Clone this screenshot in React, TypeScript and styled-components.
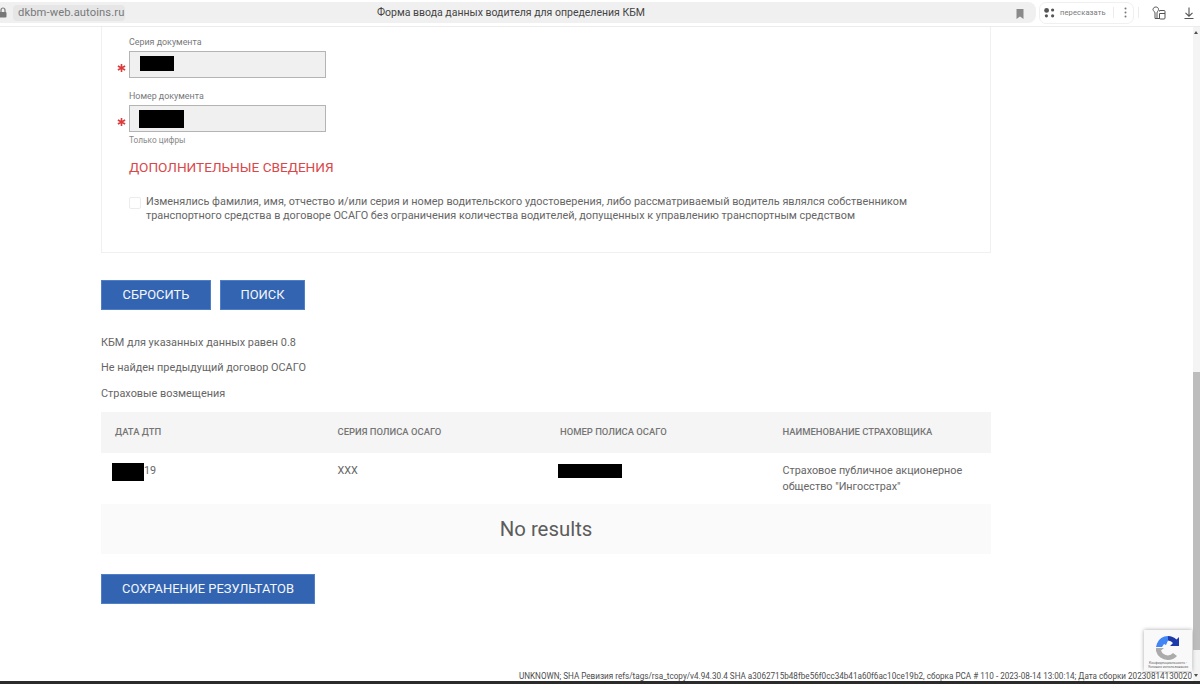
import styled, { createGlobalStyle } from "styled-components";

const GlobalStyle = createGlobalStyle`
  html, body {
    margin: 0;
    padding: 0;
    height: 100%;
    overflow: hidden;
    background: #fff;
  }
  * {
    box-sizing: border-box;
  }
`;

const Screen = styled.div`
  width: 1200px;
  height: 684px;
  position: relative;
  display: flex;
  flex-direction: column;
  overflow: hidden;
  font-family: Roboto, "Liberation Sans", sans-serif;
  color: #6b6b6b;
`;

const BrowserBar = styled.div`
  height: 27px;
  flex: none;
  display: flex;
  align-items: center;
  background: #fff;
  border-bottom: 1px solid #ececec;
  padding-bottom: 1px;
`;

const AddressBar = styled.div`
  width: 1036px;
  height: 21px;
  flex: none;
  display: flex;
  align-items: center;
  background: #f0f0f0;
  border-radius: 0 8px 8px 0;
  position: relative;
`;

const Lock = styled.svg`
  width: 8px;
  height: 11px;
  margin-left: -1px;
  flex: none;
`;

const Host = styled.div`
  margin-left: 6px;
  width: 112px;
  height: 16px;
  padding-left: 5px;
  display: flex;
  align-items: center;
  background: #e6e6e6;
  border-radius: 4px;
  font-size: 11.2px;
  letter-spacing: 0.1px;
  color: #77797b;
`;

const PageTitle = styled.div`
  position: absolute;
  left: 377px;
  top: 4px;
  font-size: 10.5px;
  line-height: 13px;
  color: #444;
`;

const Bookmark = styled.svg`
  position: absolute;
  left: 1016px;
  top: 7px;
  width: 8px;
  height: 10px;
`;

const RetellBox = styled.div`
  width: 95px;
  height: 22px;
  margin-left: 3px;
  display: flex;
  align-items: center;
  flex: none;
  border: 1px solid #f0f0f0;
  border-radius: 7px;
  padding-left: 4px;
  font-size: 7.6px;
  letter-spacing: 0.1px;
  color: #77797b;
`;

const RetellLabel = styled.span`
  margin-left: 5px;
`;

const Divider = styled.span`
  width: 1px;
  height: 11px;
  margin-left: 7px;
  background: #ececec;
  flex: none;
`;

const MoreDots = styled.svg`
  width: 3px;
  height: 11px;
  margin-left: 10px;
  flex: none;
`;

const OuterDivider = styled(Divider)`
  margin-left: 4px;
`;

const ToolIcon = styled.svg<{ $left: number }>`
  width: 14px;
  height: 14px;
  margin-left: ${(p) => p.$left}px;
  flex: none;
`;

const Page = styled.div`
  flex: 1;
  min-height: 0;
  padding-left: 101px;
  width: 991px;
  box-sizing: content-box;
`;

const FormCard = styled.div`
  width: 890px;
  height: 226px;
  padding: 10px 0 0 27px;
  border: 1px solid #f0f0f0;
  border-top: none;
`;

const FieldLabel = styled.div`
  font-size: 8.9px;
  line-height: 11px;
  color: #77797b;
`;

const FieldRow = styled.div`
  display: flex;
  align-items: center;
  margin: 3px 0 0 -12px;
`;

const Asterisk = styled.svg`
  width: 9px;
  height: 10px;
  margin: 6px 3px 0 0;
  flex: none;
`;

const TextBox = styled.div<{ $inset: number }>`
  width: 197px;
  height: 27px;
  background: #f0f0f0;
  border: 1px solid #b4b4b4;
  padding: 4px 0 0 ${(p) => p.$inset}px;
`;

const Redacted = styled.div<{ $w: number; $h: number }>`
  width: ${(p) => p.$w}px;
  height: ${(p) => p.$h}px;
  background: #000;
`;

const FieldGroup = styled.div`
  margin-bottom: 13px;
`;

const Hint = styled.div`
  font-size: 8.3px;
  line-height: 11px;
  margin: -10px 0 0 0;
  color: #8a8a8a;
`;

const SectionTitle = styled.h3`
  margin: 12px 0 0 0;
  font-size: 13.6px;
  line-height: 18px;
  font-weight: 400;
  color: #d9474a;
`;

const CheckRow = styled.div`
  display: flex;
  margin-top: 19px;
`;

const CheckBox = styled.div`
  width: 12px;
  height: 12px;
  flex: none;
  margin: 2px 5px 0 0;
  border: 1px solid #ececec;
  border-radius: 2px;
`;

const CheckText = styled.div`
  font-size: 10.86px;
  line-height: 13.5px;
  width: 775px;
  color: #666;
`;

const Buttons = styled.div`
  display: flex;
  gap: 9px;
  margin-top: 27px;
`;

const Button = styled.div<{ $w: number }>`
  width: ${(p) => p.$w}px;
  height: 30px;
  padding-bottom: 2px;
  display: flex;
  align-items: center;
  justify-content: center;
  background: #3264b1;
  border: 1px solid #4f7fc6;
  color: #f4f6fa;
  font-size: 12.9px;
  font-weight: 400;
`;

const Messages = styled.div`
  margin-top: 26px;
  display: flex;
  flex-direction: column;
  gap: 11px;
  font-size: 10.9px;
  line-height: 14.4px;
  color: #666;
`;

const ResultTable = styled.div`
  width: 890px;
  margin-top: 11px;
`;

const HeadRow = styled.div`
  display: grid;
  grid-template-columns: repeat(4, 222.5px);
  height: 41px;
  padding-bottom: 2px;
  align-items: center;
  background: #f5f5f5;
  font-size: 9.45px;
  font-weight: 500;
  color: #757575;
`;

const HeadCell = styled.div`
  padding-left: 14px;
`;

const BodyRow = styled.div`
  display: grid;
  grid-template-columns: repeat(4, 222.5px);
  height: 51px;
  font-size: 10.82px;
  line-height: 15.5px;
  color: #666;
  padding-top: 10px;
`;

const BodyCell = styled.div`
  padding-left: 14px;
  display: flex;
  align-items: flex-start;
`;

const DateMask = styled(Redacted)`
  margin: 0 0 0 -3px;
`;

const PolicyMask = styled(Redacted)`
  margin: 1px 0 0 -2px;
`;

const NoResults = styled.div`
  height: 50px;
  display: flex;
  align-items: center;
  justify-content: center;
  background: #fafafa;
  font-size: 20.4px;
  color: #5c5c5c;
`;

const SaveRow = styled.div`
  margin-top: 20px;
`;

const Scrollbar = styled.div`
  position: absolute;
  right: 0;
  top: 27px;
  bottom: 3px;
  width: 7px;
  background: #f4f4f4;
`;

const ScrollThumb = styled.div`
  position: absolute;
  left: 0;
  right: 0;
  top: 345px;
  bottom: 31px;
  background: #bdbdbd;
`;

const ScrollArrow = styled.div<{ $down?: boolean }>`
  position: absolute;
  left: 1px;
  ${(p) => (p.$down ? "bottom: 4px;" : "top: 4px;")}
  border-left: 2.5px solid transparent;
  border-right: 2.5px solid transparent;
  ${(p) => (p.$down ? "border-top: 3px solid #505050;" : "border-bottom: 3px solid #505050;")}
`;

const Recaptcha = styled.div`
  position: absolute;
  right: 8px;
  top: 630px;
  width: 48px;
  height: 41px;
  background: #f9f9f9;
  box-shadow: 0 0 4px #a5a5a5;
  display: flex;
  flex-direction: column;
  align-items: center;
  padding-top: 5px;
`;

const RecaptchaNote = styled.div`
  font-size: 3.5px;
  line-height: 4px;
  text-align: center;
  color: #666;
  white-space: nowrap;
`;

const BuildInfo = styled.div`
  position: absolute;
  left: 0;
  right: 0;
  bottom: 3px;
  height: 10px;
  padding-right: 8px;
  text-align: right;
  font-size: 8.14px;
  line-height: 10px;
  color: #4d4d4d;
  white-space: nowrap;
`;

const BottomEdge = styled.div`
  position: absolute;
  left: 0;
  right: 0;
  bottom: 0;
  height: 3px;
  background: #2b2b2b;
`;

export default function App() {
  return (
    <Screen>
      <GlobalStyle />
      <BrowserBar>
        <AddressBar>
          <Lock viewBox="0 0 8 11">
            <path d="M2 5V3a2 2 0 0 1 4 0v2" fill="none" stroke="#777" strokeWidth="1.2" />
            <rect x="0.5" y="5" width="7" height="5.5" rx="1" fill="#777" />
          </Lock>
          <Host>dkbm-web.autoins.ru</Host>
          <PageTitle>Форма ввода данных водителя для определения КБМ</PageTitle>
          <Bookmark viewBox="0 0 8 10">
            <path d="M0.5 0h7v10L4 7.6 0.5 10z" fill="#8a8a8a" />
          </Bookmark>
        </AddressBar>
        <RetellBox>
          <svg width="11" height="10" viewBox="0 0 11 10">
            <circle cx="2.6" cy="2.4" r="2.4" fill="#555" />
            <circle cx="8.6" cy="2" r="1.6" fill="#555" />
            <circle cx="2.4" cy="7.8" r="1.6" fill="#555" />
            <circle cx="8.6" cy="7.8" r="1.6" fill="#555" />
          </svg>
          <RetellLabel>пересказать</RetellLabel>
          <Divider />
          <MoreDots viewBox="0 0 3 11">
            <circle cx="1.5" cy="1.5" r="1" fill="#777" />
            <circle cx="1.5" cy="5.5" r="1" fill="#777" />
            <circle cx="1.5" cy="9.5" r="1" fill="#777" />
          </MoreDots>
        </RetellBox>
        <OuterDivider />
        <ToolIcon $left={13} viewBox="0 0 14 14">
          <path
            d="M1 3.500C1 1.500 3 1 4 1s2.500.5 2.500 2.500C6.500 5 5 5.500 5 7v5.500h3M7.500 5.500V4.500H12a1 1 0 0 1 1 1V12a1 1 0 0 1-1 1H8.500a1 1 0 0 1-1-1V7.500H13M1 3.500C1 5 3 5.500 3 7v5.500h2"
            fill="none"
            stroke="#555"
            strokeWidth="1"
          />
        </ToolIcon>
        <ToolIcon $left={16} viewBox="0 0 14 14">
          <path d="M7 1.500V10M3.500 6.800 7 10.200l3.500-3.400M2.500 12.500h9" fill="none" stroke="#555" strokeWidth="1.1" />
        </ToolIcon>
      </BrowserBar>
      <Page>
        <FormCard>
          <FieldGroup>
            <FieldLabel>Серия документа</FieldLabel>
            <FieldRow>
              <Asterisk viewBox="0 0 10 10">
                <path d="M5 0.500V9.500M1 2.800 9 7.200M9 2.800 1 7.200" stroke="#dc3b3b" strokeWidth="1.8" />
              </Asterisk>
              <TextBox $inset={10}>
                <Redacted $w={34} $h={15} />
              </TextBox>
            </FieldRow>
          </FieldGroup>
          <FieldGroup>
            <FieldLabel>Номер документа</FieldLabel>
            <FieldRow>
              <Asterisk viewBox="0 0 10 10">
                <path d="M5 0.500V9.500M1 2.800 9 7.200M9 2.800 1 7.200" stroke="#dc3b3b" strokeWidth="1.8" />
              </Asterisk>
              <TextBox $inset={9}>
                <Redacted $w={45} $h={18} />
              </TextBox>
            </FieldRow>
          </FieldGroup>
          <Hint>Только цифры</Hint>
          <SectionTitle>ДОПОЛНИТЕЛЬНЫЕ СВЕДЕНИЯ</SectionTitle>
          <CheckRow>
            <CheckBox />
            <CheckText>
              Изменялись фамилия, имя, отчество и/или серия и номер водительского удостоверения, либо
              рассматриваемый водитель являлся собственником транспортного средства в договоре ОСАГО
              без ограничения количества водителей, допущенных к управлению транспортным средством
            </CheckText>
          </CheckRow>
        </FormCard>
        <Buttons>
          <Button $w={110}>СБРОСИТЬ</Button>
          <Button $w={85}>ПОИСК</Button>
        </Buttons>
        <Messages>
          <div>КБМ для указанных данных равен 0.8</div>
          <div>Не найден предыдущий договор ОСАГО</div>
          <div>Страховые возмещения</div>
        </Messages>
        <ResultTable>
          <HeadRow>
            <HeadCell>ДАТА ДТП</HeadCell>
            <HeadCell>СЕРИЯ ПОЛИСА ОСАГО</HeadCell>
            <HeadCell>НОМЕР ПОЛИСА ОСАГО</HeadCell>
            <HeadCell>НАИМЕНОВАНИЕ СТРАХОВЩИКА</HeadCell>
          </HeadRow>
          <BodyRow>
            <BodyCell>
              <DateMask $w={32} $h={18} />
              19
            </BodyCell>
            <BodyCell>XXX</BodyCell>
            <BodyCell>
              <PolicyMask $w={64} $h={14} />
            </BodyCell>
            <BodyCell>Страховое публичное акционерное общество "Ингосстрах"</BodyCell>
          </BodyRow>
          <NoResults>No results</NoResults>
        </ResultTable>
        <SaveRow>
          <Button $w={214}>СОХРАНЕНИЕ РЕЗУЛЬТАТОВ</Button>
        </SaveRow>
      </Page>
      <Scrollbar>
        <ScrollArrow />
        <ScrollThumb />
        <ScrollArrow $down />
      </Scrollbar>
      <Recaptcha>
        <svg width="28" height="26" viewBox="0 0 28 26">
          <path d="M14 1a12 12 0 0 1 8.500 3.500L25 2v9h-9l3-3a8 8 0 0 0-5-2.500z" fill="#1c3aa9" />
          <path d="M14 1A12 12 0 0 0 3 8.500L2 12h6l2-3 2 1 2-4.500z" fill="#4285f4" />
          <path d="M2 13v3a12 12 0 0 0 12 9 12 12 0 0 0 9-4l-4-3a8 8 0 0 1-5 2.500 8 8 0 0 1-7-5l3-2.500z" fill="#ababab" />
        </svg>
        <RecaptchaNote>
          Конфиденциальность -
          <br />
          Условия использования
        </RecaptchaNote>
      </Recaptcha>
      <BuildInfo>
        UNKNOWN; SHA Ревизия refs/tags/rsa_tcopy/v4.94.30.4 SHA a3062715b48fbe56f0cc34b41a60f6ac10ce19b2,
        сборка РСА # 110 - 2023-08-14 13:00:14; Дата сборки 20230814130020
      </BuildInfo>
      <BottomEdge />
    </Screen>
  );
}
